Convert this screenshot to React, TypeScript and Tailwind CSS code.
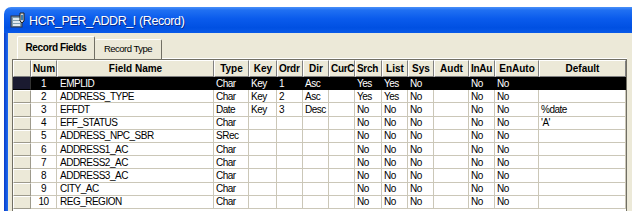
import React from "react";

const rows: string[][] = [
  ["1", "EMPLID", "Char", "Key", "1", "Asc", "", "Yes", "Yes", "No", "", "No", "No", ""],
  ["2", "ADDRESS_TYPE", "Char", "Key", "2", "Asc", "", "Yes", "Yes", "No", "", "No", "No", ""],
  ["3", "EFFDT", "Date", "Key", "3", "Desc", "", "No", "No", "No", "", "No", "No", "%date"],
  ["4", "EFF_STATUS", "Char", "", "", "", "", "No", "No", "No", "", "No", "No", "'A'"],
  ["5", "ADDRESS_NPC_SBR", "SRec", "", "", "", "", "No", "No", "No", "", "No", "No", ""],
  ["6", "ADDRESS1_AC", "Char", "", "", "", "", "No", "No", "No", "", "No", "No", ""],
  ["7", "ADDRESS2_AC", "Char", "", "", "", "", "No", "No", "No", "", "No", "No", ""],
  ["8", "ADDRESS3_AC", "Char", "", "", "", "", "No", "No", "No", "", "No", "No", ""],
  ["9", "CITY_AC", "Char", "", "", "", "", "No", "No", "No", "", "No", "No", ""],
  ["10", "REG_REGION", "Char", "", "", "", "", "No", "No", "No", "", "No", "No", ""],
];

// header labels as they show in the narrow columns
const headers = [
  { t: "Num", left: false },
  { t: "Field Name", left: false },
  { t: "Type", left: false },
  { t: "Key", left: false },
  { t: "Ordr", left: true },
  { t: "Dir", left: false },
  { t: "CurC", left: true },
  { t: "Srch", left: true },
  { t: "List", left: false },
  { t: "Sys", left: false },
  { t: "Audt", left: false },
  { t: "InAu", left: true },
  { t: "EnAuto", left: false },
  { t: "Default", left: false },
];

const cols =
  "grid grid-cols-[18px_26px_157px_35px_28px_26px_26px_26px_27px_26px_26px_35px_26px_44px_87px]";

function RecordIcon() {
  return (
    <svg width="16" height="16" viewBox="0 0 16 16">
      <rect x="1" y="4" width="11" height="11" fill="#7f9db0" stroke="#334" strokeWidth="1" />
      <rect x="3" y="6" width="7" height="2" fill="#dfe8ee" />
      <rect x="3" y="9" width="7" height="2" fill="#dfe8ee" />
      <rect x="3" y="12" width="7" height="2" fill="#dfe8ee" />
      <path d="M10 1 L14 1 L14 9 L12 11 L10 9 Z" fill="#cfd6dc" stroke="#222" strokeWidth="1" />
      <rect x="11" y="3" width="2" height="5" fill="#3a7fb0" />
    </svg>
  );
}

export default function App() {
  return (
    <div className="h-[211px] w-[632px] overflow-hidden bg-white pl-[4px] pt-[7px] font-['Liberation_Sans',Arial,sans-serif] text-black">
      <div className="flex h-full flex-col overflow-hidden rounded-tl-[7px]">
        {/* title bar */}
        <div className="flex h-[26px] shrink-0 items-center bg-[linear-gradient(180deg,#4a90f8_0%,#2070f2_12%,#0a5bec_45%,#0050e2_80%,#0a5ae8_100%)] pl-[6px]">
          <RecordIcon />
          <span className="ml-[3px] mt-[2px] text-[12.5px] tracking-[-0.4px] text-white [text-shadow:1px_1px_0_#0a2a8a]">
            HCR_PER_ADDR_I (Record)
          </span>
        </div>

        <div className="flex flex-1">
          {/* blue window frame */}
          <div className="w-[4px] shrink-0 bg-[linear-gradient(90deg,#0a3cc8,#1e6cf0)]" />

          <div className="flex flex-1 flex-col bg-[#ece9d8] pl-[4px] pr-[6px] pt-[3px]">
            {/* tabs */}
            <div className="flex h-[23px] shrink-0 items-end pl-[5px]">
              <div className="flex h-[23px] w-[78px] items-center justify-center rounded-t-[2px] border-l border-r border-t border-l-white border-r-[#716f64] border-t-white bg-[#ece9d8] pb-[2px] text-[10px] font-bold tracking-[-0.4px]">
                Record Fields
              </div>
              <div className="flex h-[20px] w-[67px] items-center justify-center rounded-t-[2px] border-r border-t border-r-[#716f64] border-t-white bg-[#ece9d8] text-[9.5px] tracking-[-0.5px]">
                Record Type
              </div>
              <div className="h-[20px] flex-1 border-b border-b-white" />
            </div>

            {/* grid */}
            <div className="flex flex-1 flex-col border-l border-r border-t border-[#716f64] bg-white">
              <div className={cols}>
                <div className="h-[17px] border-b border-l border-r border-t border-b-[#808080] border-l-white border-r-[#808080] border-t-white bg-[#ece9d8]" />
                {headers.map((h, i) => (
                  <div
                    key={i}
                    className={`flex h-[17px] items-center overflow-hidden whitespace-nowrap border-b border-l border-r border-t border-b-[#808080] border-l-white border-r-[#808080] border-t-white bg-[#ece9d8] text-[10px] font-bold ${
                      h.left ? "justify-start pl-[1px] tracking-[-0.3px]" : "justify-center"
                    }`}
                  >
                    {h.t}
                  </div>
                ))}
              </div>

              {rows.map((r, ri) => {
                const sel = ri === 0;
                return (
                  <div key={ri} className={cols}>
                    <div
                      className={
                        sel
                          ? "h-[13.2px] border-b border-r border-b-[#000] border-r-[#333] bg-[#1a1a30]"
                          : "h-[13.2px] border-b border-l border-r border-t border-b-[#9d9a8c] border-l-white border-r-[#9d9a8c] border-t-white bg-[#ece9d8]"
                      }
                    />
                    {r.map((c, ci) => (
                      <div
                        key={ci}
                        className={`flex h-[13.2px] items-center overflow-hidden whitespace-nowrap border-b border-r text-[10px] tracking-[-0.5px] ${
                          ci === 0 ? "justify-center" : ci === 1 ? "pl-[3px]" : "pl-[2px]"
                        } ${
                          sel
                            ? "border-[#000] bg-black text-white"
                            : "border-[#cbc7b8] bg-white text-black"
                        }`}
                      >
                        {c}
                      </div>
                    ))}
                  </div>
                );
              })}
            </div>
          </div>
        </div>
      </div>
    </div>
  );
}
